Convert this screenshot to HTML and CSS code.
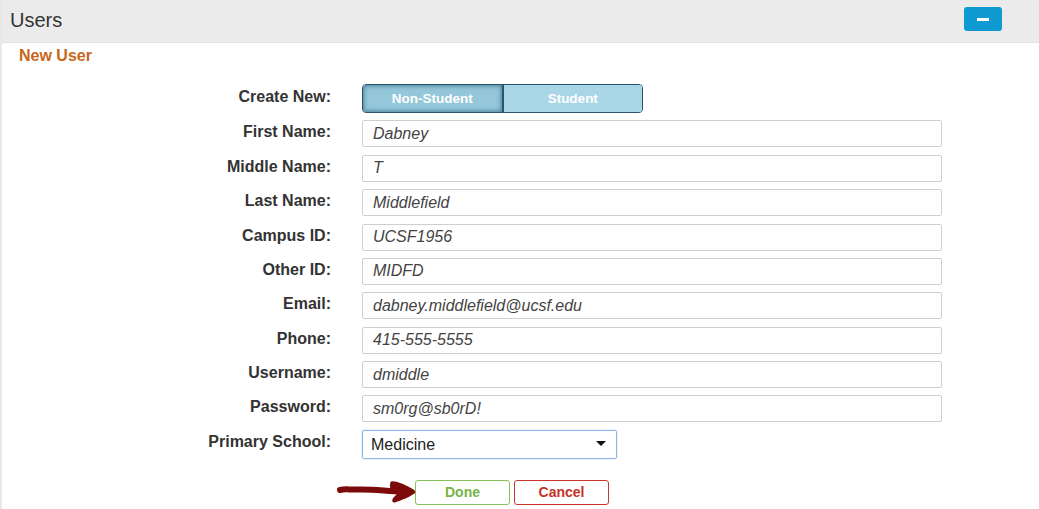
FILE: index.html
```html
<!DOCTYPE html>
<html>
<head>
<meta charset="utf-8">
<link rel="stylesheet" href="styles.css">
</head>
<body>
<div class="panel">
  <div class="panel-head">
    <h1 class="title">Users</h1>
    <button class="collapse" type="button"><span class="bar"></span></button>
  </div>
  <div class="panel-body">
    <h2 class="section">New User</h2>
    <form class="form">
      <label class="lbl">Create New:</label>
      <div class="toggle">
        <span class="tg tg-on">Non-Student</span>
        <span class="tg">Student</span>
      </div>
      <label class="lbl">First Name:</label>
      <div class="input">Dabney</div>
      <label class="lbl">Middle Name:</label>
      <div class="input">T</div>
      <label class="lbl">Last Name:</label>
      <div class="input">Middlefield</div>
      <label class="lbl">Campus ID:</label>
      <div class="input">UCSF1956</div>
      <label class="lbl">Other ID:</label>
      <div class="input">MIDFD</div>
      <label class="lbl">Email:</label>
      <div class="input">dabney.middlefield@ucsf.edu</div>
      <label class="lbl">Phone:</label>
      <div class="input">415-555-5555</div>
      <label class="lbl">Username:</label>
      <div class="input">dmiddle</div>
      <label class="lbl">Password:</label>
      <div class="input">sm0rg@sb0rD!</div>
      <label class="lbl lbl-sel">Primary School:</label>
      <div class="select">Medicine<span class="caret"></span></div>
      <div class="actions">
        <svg class="arrow" width="84" height="26" viewBox="0 0 84 26">
          <path d="M4 11 C10 9.5 14 11 22 10.5 C36 10 50 12 66 12.5" stroke="#7d0a0a" stroke-width="6" stroke-linecap="round" fill="none"/>
          <path d="M55 2.5 C60 1.5 67 5 74 8.5 C78 10.5 80 12 79 14 C75 17.5 66 21 59 23.5 C56 24 55.5 21 57.5 18.5 L61 15 L57 13 C54 11 53 6 55 2.5 Z" fill="#7d0a0a"/>
        </svg>
        <button class="btn btn-done" type="button">Done</button>
        <button class="btn btn-cancel" type="button">Cancel</button>
      </div>
    </form>
  </div>
</div>
</body>
</html>
```
FILE: styles.css
```css
* { box-sizing: border-box; }
html, body { margin: 0; padding: 0; background: #fff; }
body { font-family: "Liberation Sans", Arial, sans-serif; color: #333; }

.panel {
  width: 1039px;
  height: 509px;
  border-left: 2px solid #e8e8e8;
  overflow: hidden;
}
.panel-head {
  height: 43px;
  background: #ebebeb;
  border-bottom: 1px solid #e2e2e2;
  display: flex;
  align-items: center;
  justify-content: space-between;
  padding: 0 37px 0 8px;
}
.title {
  margin: 0;
  font-size: 20px;
  font-weight: normal;
  color: #333;
  position: relative;
  top: -1px;
}
.collapse {
  width: 38px;
  height: 24px;
  border: none;
  border-radius: 3px;
  background: #0f9bd1;
  display: flex;
  align-items: center;
  justify-content: center;
  padding: 0;
  position: relative;
  top: -2px;
}
.collapse .bar {
  width: 12px;
  height: 3px;
  background: #fff;
}
.section {
  margin: 0;
  padding: 3px 0 0 17px;
  font-size: 16px;
  font-weight: bold;
  color: #c8671b;
  line-height: 19px;
}
.form {
  display: grid;
  grid-template-columns: 329px 580px;
  column-gap: 31px;
  row-gap: 7.375px;
  margin-top: 19px;
}
.lbl {
  font-size: 16px;
  font-weight: bold;
  color: #333;
  text-align: right;
  align-self: center;
  position: relative;
  top: -1.5px;
}
.lbl-sel { top: -2.5px; }
.toggle {
  width: 281px;
  height: 29px;
  display: flex;
  border: 1px solid #2c5368;
  border-radius: 4px;
  overflow: hidden;
}
.tg {
  flex: 1;
  display: flex;
  align-items: center;
  justify-content: center;
  background: #a9d6e6;
  color: #fff;
  font-size: 13.5px;
  font-weight: bold;
}
.tg-on {
  background: #94c7d9;
  border-right: 2px solid #2c5368;
  box-shadow: inset 0 0 4px 1px #4a7f97;
}
.input {
  height: 27px;
  border: 1px solid #cfcfcf;
  border-radius: 2px;
  padding: 0 10px;
  font-size: 16px;
  font-style: italic;
  color: #444;
  display: flex;
  align-items: center;
}
.select {
  width: 255px;
  height: 29px;
  margin-top: 0.6px;
  border: 1px solid #8ab7e6;
  border-radius: 2px;
  box-shadow: 0 0 2px #b7d4f2;
  padding: 0 10px 0 8px;
  font-size: 16px;
  color: #222;
  display: flex;
  align-items: center;
  justify-content: space-between;
}
.caret {
  width: 0;
  height: 0;
  border-left: 5px solid transparent;
  border-right: 5px solid transparent;
  border-top: 5px solid #111;
  margin-top: -2px;
}
.actions {
  grid-column: 2;
  margin-top: 13px;
  display: flex;
  gap: 4px;
  padding-left: 53px;
  position: relative;
}
.btn {
  width: 95px;
  height: 25px;
  background: #fff;
  border-radius: 3px;
  font-family: "Liberation Sans", Arial, sans-serif;
  font-size: 14px;
  font-weight: bold;
  padding: 0;
}
.btn-done { border: 1px solid #86c15a; color: #77b447; }
.btn-cancel { border: 1px solid #c9372c; color: #c43325; }
.arrow {
  position: absolute;
  left: -26px;
  top: -1px;
}
```
